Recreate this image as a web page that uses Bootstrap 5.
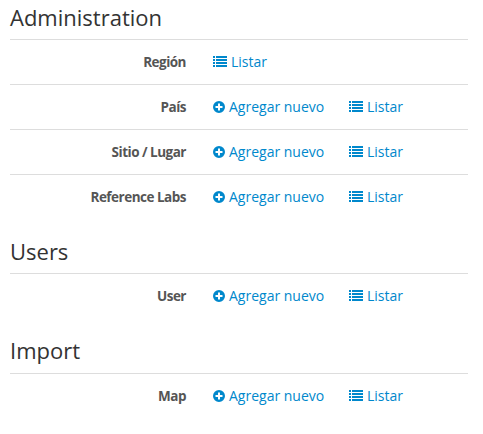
<!DOCTYPE html>
<html lang="es">
<head>
<meta charset="utf-8">
<meta name="viewport" content="width=device-width, initial-scale=1">
<title>Administration</title>
<link href="https://cdn.jsdelivr.net/npm/bootstrap@5.3.0/dist/css/bootstrap.min.css" rel="stylesheet">
<style>
body{font-family:"Open Sans",sans-serif;font-size:14px;line-height:20px;color:#555;background:#fff}
.admin-page{width:458px;margin-left:10px}
.section-title{font-size:22px;line-height:26px;font-weight:400;color:#333;margin:0;padding-top:4px;height:39px}
.section-title.later{height:54px;padding-top:19px}
.section-title.import-title{height:55px}
.entry{height:45px;border-top:1px solid #ddd;padding-top:12px}
.entry-name{width:176px;text-align:right;font-size:13.5px;font-weight:700;letter-spacing:-.5px}
.entry-links{margin-left:27px}
.entry-links a{color:#08c;text-decoration:none;white-space:nowrap}
.add-link{width:136px}
.entry-links svg{fill:currentColor;flex:none}
.list-icon{margin-bottom:1px}
</style>
<script src="https://cdn.jsdelivr.net/npm/bootstrap@5.3.0/dist/js/bootstrap.bundle.min.js"></script>
</head>
<body>
<svg class="d-none">
<symbol id="plus" viewBox="0 0 12 12"><path fill-rule="evenodd" d="M6 0a6 6 0 1 0 0 12A6 6 0 0 0 6 0ZM5 2.5h2V5h2.5v2H7v2.5H5V7H2.5V5H5Z"/></symbol>
<symbol id="list" viewBox="0 0 14 11"><path d="M0 0h2v2H0zM3 0h11v2H3zM0 3h2v2H0zM3 3h11v2H3zM0 6h2v2H0zM3 6h11v2H3zM0 9h2v2H0zM3 9h11v2H3z"/></symbol>
</svg>
<main class="admin-page">
<section><h2 class="section-title">Administration</h2>
<div class="entry d-flex align-items-start"><div class="entry-name">Región</div><div class="entry-links d-flex"><a class="d-flex align-items-center" href="#"><svg class="list-icon me-1" width="14" height="11"><use href="#list"/></svg>Listar</a></div></div>
<div class="entry d-flex align-items-start"><div class="entry-name">País</div><div class="entry-links d-flex"><a class="add-link d-flex align-items-center" href="#"><svg class="me-1" width="12" height="12"><use href="#plus"/></svg>Agregar nuevo</a><a class="d-flex align-items-center" href="#"><svg class="list-icon me-1" width="14" height="11"><use href="#list"/></svg>Listar</a></div></div>
<div class="entry d-flex align-items-start"><div class="entry-name">Sitio / Lugar</div><div class="entry-links d-flex"><a class="add-link d-flex align-items-center" href="#"><svg class="me-1" width="12" height="12"><use href="#plus"/></svg>Agregar nuevo</a><a class="d-flex align-items-center" href="#"><svg class="list-icon me-1" width="14" height="11"><use href="#list"/></svg>Listar</a></div></div>
<div class="entry d-flex align-items-start"><div class="entry-name">Reference Labs</div><div class="entry-links d-flex"><a class="add-link d-flex align-items-center" href="#"><svg class="me-1" width="12" height="12"><use href="#plus"/></svg>Agregar nuevo</a><a class="d-flex align-items-center" href="#"><svg class="list-icon me-1" width="14" height="11"><use href="#list"/></svg>Listar</a></div></div>
</section>
<section><h2 class="section-title later">Users</h2>
<div class="entry d-flex align-items-start"><div class="entry-name">User</div><div class="entry-links d-flex"><a class="add-link d-flex align-items-center" href="#"><svg class="me-1" width="12" height="12"><use href="#plus"/></svg>Agregar nuevo</a><a class="d-flex align-items-center" href="#"><svg class="list-icon me-1" width="14" height="11"><use href="#list"/></svg>Listar</a></div></div>
</section>
<section><h2 class="section-title later import-title">Import</h2>
<div class="entry d-flex align-items-start"><div class="entry-name">Map</div><div class="entry-links d-flex"><a class="add-link d-flex align-items-center" href="#"><svg class="me-1" width="12" height="12"><use href="#plus"/></svg>Agregar nuevo</a><a class="d-flex align-items-center" href="#"><svg class="list-icon me-1" width="14" height="11"><use href="#list"/></svg>Listar</a></div></div>
</section>
</main>
</body>
</html>
